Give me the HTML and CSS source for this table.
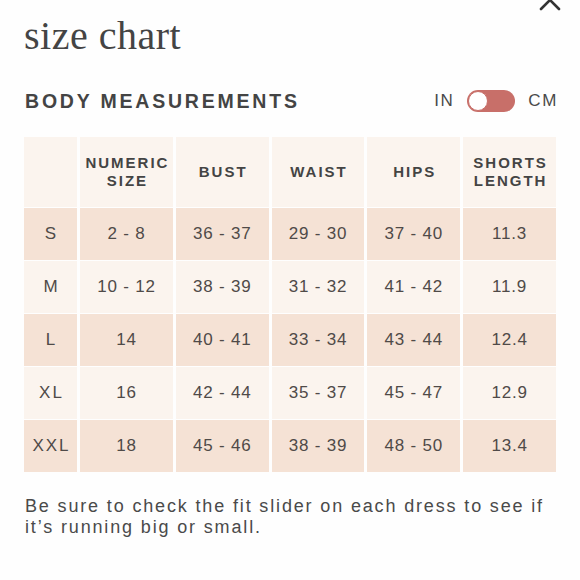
FILE: index.html
```html
<!DOCTYPE html>
<html lang="en">
<head>
<meta charset="utf-8">
<title>size chart</title>
<link rel="stylesheet" href="styles.css">
</head>
<body>
<div class="page">
  <button class="close" aria-label="Close">
    <svg width="24" height="24" viewBox="0 0 24 24"><path d="M3 3 L21 21 M21 3 L3 21" stroke="#333" stroke-width="2.6" stroke-linecap="round" fill="none"/></svg>
  </button>
  <h1 class="title">size chart</h1>
  <div class="section-head">
    <h2 class="section-title">BODY MEASUREMENTS</h2>
    <div class="units">
      <span class="unit">IN</span>
      <span class="toggle"><span class="knob"></span></span>
      <span class="unit">CM</span>
    </div>
  </div>
  <div class="chart">
    <div class="row head">
      <div class="cell"></div>
      <div class="cell">NUMERIC<br>SIZE</div>
      <div class="cell">BUST</div>
      <div class="cell">WAIST</div>
      <div class="cell">HIPS</div>
      <div class="cell">SHORTS<br>LENGTH</div>
    </div>
    <div class="row dark">
      <div class="cell size">S</div><div class="cell">2 - 8</div><div class="cell">36 - 37</div><div class="cell">29 - 30</div><div class="cell">37 - 40</div><div class="cell">11.3</div>
    </div>
    <div class="row light">
      <div class="cell size">M</div><div class="cell">10 - 12</div><div class="cell">38 - 39</div><div class="cell">31 - 32</div><div class="cell">41 - 42</div><div class="cell">11.9</div>
    </div>
    <div class="row dark">
      <div class="cell size">L</div><div class="cell">14</div><div class="cell">40 - 41</div><div class="cell">33 - 34</div><div class="cell">43 - 44</div><div class="cell">12.4</div>
    </div>
    <div class="row light">
      <div class="cell size">XL</div><div class="cell">16</div><div class="cell">42 - 44</div><div class="cell">35 - 37</div><div class="cell">45 - 47</div><div class="cell">12.9</div>
    </div>
    <div class="row dark">
      <div class="cell size">XXL</div><div class="cell">18</div><div class="cell">45 - 46</div><div class="cell">38 - 39</div><div class="cell">48 - 50</div><div class="cell">13.4</div>
    </div>
  </div>
  <p class="note">Be sure to check the fit slider on each dress to see if it’s running big or small.</p>
</div>
</body>
</html>
```

FILE: styles.css
```css
* { box-sizing: border-box; }
html, body { margin: 0; padding: 0; background: #fefefe; }
body { font-family: "Liberation Sans", Arial, sans-serif; color: #454545; }

.page {
  position: relative;
  width: 580px;
  height: 580px;
  overflow: hidden;
  padding: 16px 24px 0 24px;
}

.close {
  position: absolute;
  top: -12px;
  right: 18px;
  width: 24px;
  height: 24px;
  padding: 0;
  border: 0;
  background: none;
}
.close svg { display: block; }

.title {
  margin: 0;
  font-family: "Liberation Serif", "Times New Roman", serif;
  font-weight: normal;
  font-size: 40px;
  line-height: 40px;
  color: #444;
  letter-spacing: 0.5px;
}

.section-head {
  margin-top: 34px;
  height: 22px;
  display: flex;
  align-items: center;
  justify-content: space-between;
}
.section-title {
  margin: 0;
  font-size: 19.5px;
  line-height: 22px;
  font-weight: bold;
  letter-spacing: 2.8px;
  color: #444;
  padding-left: 1px;
}
.units {
  display: flex;
  align-items: center;
  gap: 13px;
}
.unit {
  font-size: 17px;
  line-height: 22px;
  letter-spacing: 1.6px;
  color: #4a4a4a;
}
.unit:last-child { margin-right: -2px; }
.toggle {
  position: relative;
  width: 48px;
  height: 22px;
  border-radius: 11px;
  background: #c86f69;
}
.knob {
  position: absolute;
  left: 1px;
  top: 1px;
  width: 20px;
  height: 20px;
  border-radius: 50%;
  background: #fff;
  border: 1.5px solid #c86f69;
}

.chart {
  margin-top: 25px;
  display: flex;
  flex-direction: column;
  gap: 1px;
}
.row {
  display: grid;
  grid-template-columns: 53px repeat(5, 1fr);
  column-gap: 3px;
  height: 52px;
}
.row.head { height: 70px; }
.cell {
  display: flex;
  align-items: center;
  justify-content: center;
  text-align: center;
  font-size: 17px;
  letter-spacing: 0.8px;
  color: #4f4a48;
}
.cell.size { letter-spacing: 2px; padding-left: 2px; }
.head .cell {
  background: #fbf4ee;
  font-weight: bold;
  font-size: 15px;
  line-height: 18px;
  letter-spacing: 2px;
  color: #444;
  padding-left: 2px;
}
.light .cell { background: #fbf4ee; }
.dark .cell { background: #f5e2d5; }

.note {
  margin: 24px 0 0 0;
  max-width: 526px;
  font-size: 18px;
  line-height: 21px;
  letter-spacing: 1.85px;
  color: #4a4a4a;
  padding-left: 1px;
}
```
